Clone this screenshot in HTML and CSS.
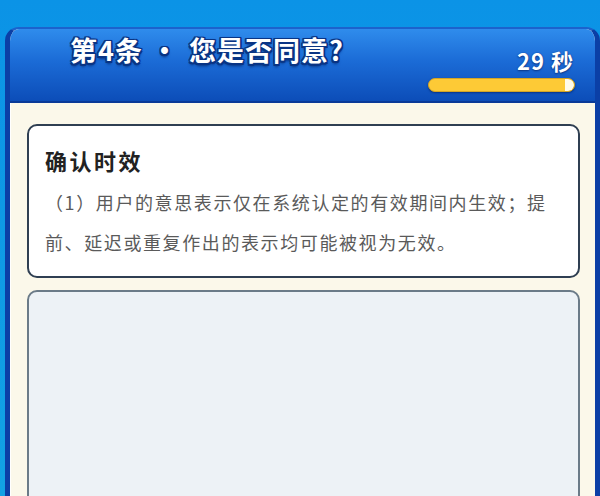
FILE: index.html
```html
<!DOCTYPE html>
<html lang="zh-CN">
<head>
<meta charset="utf-8">
<link rel="stylesheet" href="styles.css">
</head>
<body>
<div class="panel">
  <div class="header">
    <div class="title">第4条<span class="sep">·</span>您是否同意?</div>
    <div class="timer">
      <div class="secs">29 秒</div>
      <div class="bar"><div class="fill"></div><div class="tip"></div></div>
    </div>
  </div>
  <div class="body">
    <div class="card">
      <div class="card-title">确认时效</div>
      <div class="card-text">（1）用户的意思表示仅在系统认定的有效期间内生效；提前、延迟或重复作出的表示均可能被视为无效。</div>
    </div>
    <div class="card empty"></div>
  </div>
</div>
</body>
</html>
```

FILE: styles.css
```css
html, body {
  margin: 0;
  padding: 0;
}
body {
  width: 600px;
  height: 496px;
  overflow: hidden;
  background: linear-gradient(180deg, #0b93e6 0%, #12a2e4 100%);
  font-family: "Noto Sans CJK SC", "Noto Sans", sans-serif;
}
.panel {
  margin: 27px 0 0 5px;
  width: 595px;
  box-sizing: border-box;
  border: 5px solid #0b3fa6;
  border-top: 2px solid #1c62cc;
  border-bottom: none;
  border-radius: 14px 14px 0 0;
  background: #fbf8ea;
  height: 480px;
  overflow: hidden;
}
.header {
  height: 72px;
  background: linear-gradient(180deg, #2f8cec 0%, #1b6bd6 45%, #0c4db8 100%);
  display: flex;
  justify-content: space-between;
  border-bottom: 2px solid #093a98;
}
.title {
  padding: 3px 0 0 60px;
  font-size: 27px;
  font-weight: 700;
  letter-spacing: 1px;
  color: #ffffff;
  line-height: 36px;
  text-shadow: 0 0 2px #0a3585, 1.5px 1.5px 0 #0a3585, -1.5px -1.5px 0 #0a3585, 1.5px -1.5px 0 #0a3585, -1.5px 1.5px 0 #0a3585, 0 1.5px 0 #0a3585, 0 -1.5px 0 #0a3585, 1.5px 0 0 #0a3585, -1.5px 0 0 #0a3585, 0 3px 3px #07307a;
}
.sep {
  margin: 0 10px 0 8px;
}
.timer {
  display: flex;
  flex-direction: column;
  align-items: flex-end;
  padding: 17px 20px 0 0;
}
.secs {
  font-size: 22px;
  font-weight: 700;
  color: #ffffff;
  line-height: 28px;
  letter-spacing: 1px;
  padding-right: 1px;
  text-shadow: 0 1px 2px #0a3585, 0 0 1px #0a3585;
}
.bar {
  margin-top: 4px;
  width: 145px;
  height: 12px;
  border-radius: 7px;
  border: 1px solid #d4a526;
  background: #fdca36;
  display: flex;
  justify-content: flex-end;
  overflow: hidden;
  box-shadow: 0 1px 2px rgba(0, 20, 80, 0.5);
}
.fill {
  flex: 1;
}
.tip {
  width: 9px;
  height: 100%;
  background: #fffbea;
  border-radius: 0 6px 6px 0;
}
.body {
  border-left: 1px solid #ffffff;
  padding: 21px 15px 0 16px;
  display: flex;
  flex-direction: column;
  gap: 12px;
}
.card {
  background: #ffffff;
  border: 2px solid #2f3f52;
  border-radius: 10px;
  padding: 19px 16px 14px 16px;
}
.card-title {
  font-size: 22px;
  font-weight: 700;
  color: #222222;
  line-height: 30px;
  letter-spacing: 2.5px;
  margin-bottom: 7px;
}
.card-text {
  font-size: 18px;
  line-height: 40px;
  color: #5a5a5a;
  letter-spacing: 1.6px;
}
.card.empty {
  background: #edf2f6;
  border-color: #6b7b88;
  height: 260px;
  padding: 0;
}
```
